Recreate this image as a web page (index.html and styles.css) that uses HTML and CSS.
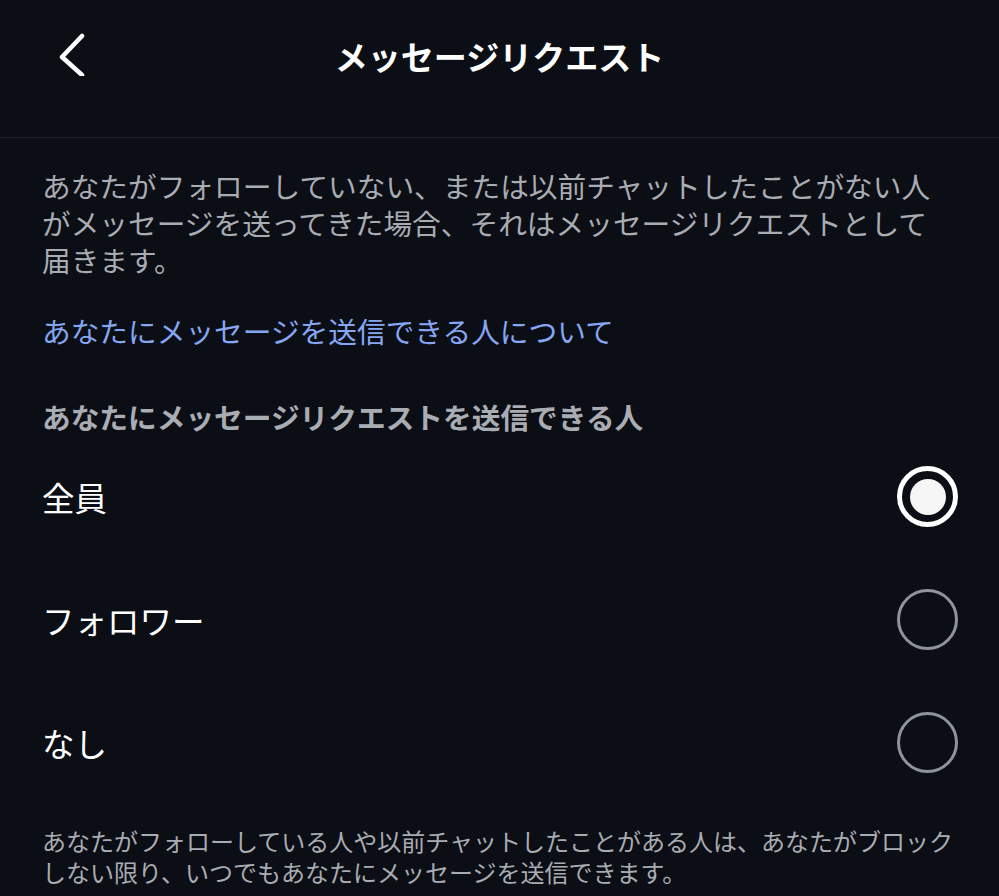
FILE: index.html
```html
<!DOCTYPE html>
<html lang="ja">
<head>
  <meta charset="UTF-8" />
  <meta name="viewport" content="width=device-width, initial-scale=1.0"/>
  <title>メッセージリクエスト</title>
  <link rel="stylesheet" href="styles.css">
</head>
<body>
  <!-- ヘッダー -->
  <header class="top-bar">
    <button class="back-btn" aria-label="戻る">
      <svg width="30" height="48" viewBox="0 0 30 48">
        <polyline points="23,8 3,29 23,47" fill="none" stroke="#fff" stroke-width="4.5" stroke-linecap="round" stroke-linejoin="round"/>
      </svg>
    </button>
    <h1>メッセージリクエスト</h1>
  </header>

  <main class="content">
    <p class="intro">あなたがフォローしていない、または以前チャットしたことがない人<br>がメッセージを送ってきた場合、それはメッセージリクエストとして<br>届きます。</p>
    <a class="info-link" href="#">あなたにメッセージを送信できる人について</a>

    <h2 class="section-title">あなたにメッセージリクエストを送信できる人</h2>

    <ul class="options">
      <li class="option">
        <span>全員</span>
        <span class="radio checked"></span>
      </li>
      <li class="option">
        <span>フォロワー</span>
        <span class="radio"></span>
      </li>
      <li class="option">
        <span>なし</span>
        <span class="radio"></span>
      </li>
    </ul>

    <p class="note">あなたがフォローしている人や以前チャットしたことがある人は、あなたがブロック<br>しない限り、いつでもあなたにメッセージを送信できます。</p>
  </main>
</body>
</html>
```

FILE: styles.css
```css
body {
  font-family: "Noto Sans CJK JP", "Noto Sans", sans-serif;
  background-color: #0b0e14;
  color: #fff;
  margin: 0;
  padding: 0;
}
.top-bar {
  position: relative;
  height: 137px;
  border-bottom: 1px solid #1d2028;
  display: flex;
  align-items: center;
  justify-content: center;
}
.top-bar h1 {
  margin: 0 0 24px;
  font-size: 33px;
  font-weight: 700;
  line-height: 1;
}
.back-btn {
  position: absolute;
  left: 59px;
  top: 28px;
  background: none;
  border: none;
  padding: 0;
  cursor: pointer;
}
.back-btn svg {
  display: block;
}
.content {
  padding: 0 42px;
}
.intro {
  margin: 0;
  padding-top: 29px;
  font-size: 28.7px;
  line-height: 37px;
  color: #a9acb3;
  white-space: nowrap;
}
.info-link {
  display: block;
  margin-top: 34px;
  font-size: 28.7px;
  line-height: 37px;
  color: #86a6f3;
  text-decoration: none;
}
.section-title {
  margin: 49px 0 0;
  font-size: 28.7px;
  line-height: 37px;
  font-weight: 700;
  color: #a9acb3;
}
.options {
  list-style: none;
  margin: 0;
  padding: 0;
}
.option {
  height: 123px;
  display: flex;
  align-items: center;
  justify-content: space-between;
  font-size: 32.5px;
}
.radio {
  width: 55px;
  height: 55px;
  border: 3px solid #8f939b;
  border-radius: 50%;
  margin-right: -1px;
  box-sizing: content-box;
  position: relative;
}
.radio.checked {
  width: 51px;
  height: 51px;
  border: 5px solid #fff;
}
.radio.checked::after {
  content: "";
  position: absolute;
  left: 7.5px;
  top: 7.5px;
  width: 36px;
  height: 36px;
  border-radius: 50%;
  background-color: #f6f6f6;
}
.note {
  margin: 21px 0 0;
  font-size: 24px;
  line-height: 31px;
  color: #a9acb3;
  white-space: nowrap;
}
```
